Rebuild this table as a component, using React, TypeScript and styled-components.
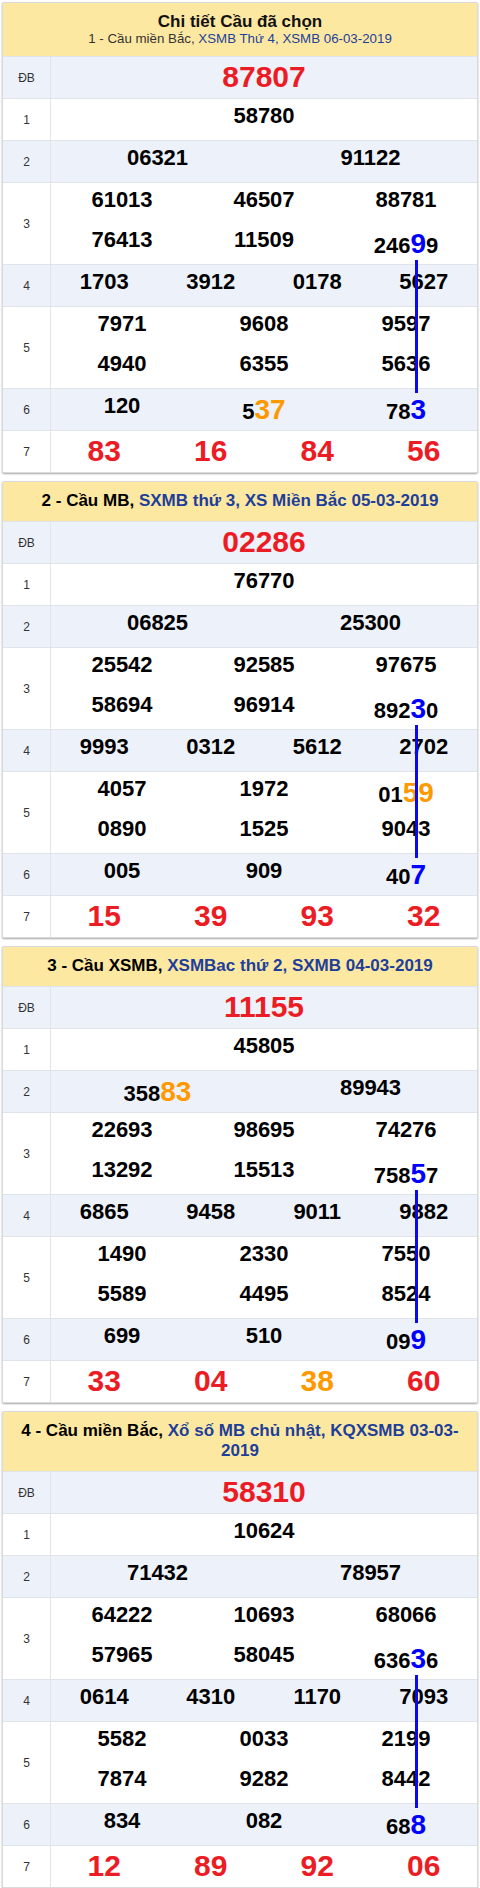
import React from "react";
import styled, { createGlobalStyle } from "styled-components";

const GlobalStyle = createGlobalStyle`
  html, body { margin: 0; padding: 0; background: #ffffff; }
  body { font-family: "Liberation Sans", Arial, sans-serif; }
  * { box-sizing: border-box; }
`;

type Seg = { t: string; c?: "blue" | "orange" };
type Num = string | Seg[];

type CardData = {
  title?: string;
  lead: string;
  link: string;
  db: string;
  r1: Num[];
  r2: Num[];
  r3: Num[][];
  r4: Num[];
  r5: Num[][];
  r6: Num[];
  r7: { t: string; c?: "orange" }[];
};

const cards: CardData[] = [
  {
    title: "Chi tiết Cầu đã chọn",
    lead: "1 - Cầu miền Bắc, ",
    link: "XSMB Thứ 4, XSMB 06-03-2019",
    db: "87807",
    r1: ["58780"],
    r2: ["06321", "91122"],
    r3: [
      ["61013", "46507", "88781"],
      ["76413", "11509", [{ t: "246" }, { t: "9", c: "blue" }, { t: "9" }]],
    ],
    r4: ["1703", "3912", "0178", "5627"],
    r5: [
      ["7971", "9608", "9597"],
      ["4940", "6355", "5636"],
    ],
    r6: ["120", [{ t: "5" }, { t: "37", c: "orange" }], [{ t: "78" }, { t: "3", c: "blue" }]],
    r7: [{ t: "83" }, { t: "16" }, { t: "84" }, { t: "56" }],
  },
  {
    lead: "2 - Cầu MB, ",
    link: "SXMB thứ 3, XS Miền Bắc 05-03-2019",
    db: "02286",
    r1: ["76770"],
    r2: ["06825", "25300"],
    r3: [
      ["25542", "92585", "97675"],
      ["58694", "96914", [{ t: "892" }, { t: "3", c: "blue" }, { t: "0" }]],
    ],
    r4: ["9993", "0312", "5612", "2702"],
    r5: [
      ["4057", "1972", [{ t: "01" }, { t: "59", c: "orange" }]],
      ["0890", "1525", "9043"],
    ],
    r6: ["005", "909", [{ t: "40" }, { t: "7", c: "blue" }]],
    r7: [{ t: "15" }, { t: "39" }, { t: "93" }, { t: "32" }],
  },
  {
    lead: "3 - Cầu XSMB, ",
    link: "XSMBac thứ 2, SXMB 04-03-2019",
    db: "11155",
    r1: ["45805"],
    r2: [[{ t: "358" }, { t: "83", c: "orange" }], "89943"],
    r3: [
      ["22693", "98695", "74276"],
      ["13292", "15513", [{ t: "758" }, { t: "5", c: "blue" }, { t: "7" }]],
    ],
    r4: ["6865", "9458", "9011", "9882"],
    r5: [
      ["1490", "2330", "7550"],
      ["5589", "4495", "8524"],
    ],
    r6: ["699", "510", [{ t: "09" }, { t: "9", c: "blue" }]],
    r7: [{ t: "33" }, { t: "04" }, { t: "38", c: "orange" }, { t: "60" }],
  },
  {
    lead: "4 - Cầu miền Bắc, ",
    link: "Xổ số MB chủ nhật, KQXSMB 03-03-2019",
    db: "58310",
    r1: ["10624"],
    r2: ["71432", "78957"],
    r3: [
      ["64222", "10693", "68066"],
      ["57965", "58045", [{ t: "636" }, { t: "3", c: "blue" }, { t: "6" }]],
    ],
    r4: ["0614", "4310", "1170", "7093"],
    r5: [
      ["5582", "0033", "2199"],
      ["7874", "9282", "8442"],
    ],
    r6: ["834", "082", [{ t: "68" }, { t: "8", c: "blue" }]],
    r7: [{ t: "12" }, { t: "89" }, { t: "92" }, { t: "06" }],
  },
];

const Page = styled.div`
  padding: 2px 2px 0;
  width: 480px;
`;

const Card = styled.section`
  background: #ffffff;
  border: 1px solid #d9dadc;
  border-radius: 2px;
  box-shadow: 0 1px 2px rgba(0, 0, 0, 0.35);
  margin-bottom: 8px;
  &:last-child {
    margin-bottom: 0;
  }
`;

const Header = styled.header<{ $bold?: boolean }>`
  background: #fde8a2;
  text-align: center;
  padding: 9px 10px 10px;
  font-size: 17px;
  line-height: 20px;
  font-weight: ${(p) => (p.$bold ? 700 : 400)};
  color: #000;
`;

const Title = styled.div`
  font-size: 17px;
  font-weight: 700;
  line-height: 20px;
  color: #111;
`;

const Subtitle = styled.div`
  font-size: 13.3px;
  line-height: 14px;
  font-weight: 400;
  color: #333;
`;

const Link = styled.span`
  color: #1d3f99;
`;

const Body = styled.div`
  position: relative;
`;

const Row = styled.div<{ $alt?: boolean }>`
  display: flex;
  border-top: 1px solid #dfe3ea;
  padding-bottom: 1px;
  background: ${(p) => (p.$alt ? "#edf1f9" : "#ffffff")};
`;

const Label = styled.div`
  width: 48px;
  flex: none;
  border-right: 1px solid #e1e4ea;
  margin-bottom: -1px;
  display: flex;
  align-items: center;
  justify-content: center;
  font-size: 12px;
  color: #333;
`;

const Lines = styled.div`
  flex: 1;
  display: flex;
  flex-direction: column;
`;

const Line = styled.div`
  display: flex;
  height: 40px;
`;

const Cell = styled.div<{ $big?: boolean; $color?: string }>`
  flex: 1;
  text-align: center;
  font-weight: 700;
  font-size: ${(p) => (p.$big ? "30px" : "22px")};
  line-height: ${(p) => (p.$big ? "40px" : "1.5")};
  color: ${(p) => p.$color ?? "#000"};
  white-space: nowrap;
`;

const Hl = styled.span<{ $c: "blue" | "orange" }>`
  font-size: 28px;
  color: ${(p) => (p.$c === "blue" ? "#0000ff" : "#ff9900")};
`;

const Connector = styled.div`
  position: absolute;
  left: 412px;
  top: 204px;
  width: 3px;
  height: 133px;
  background: #0a0af0;
`;

const RED = "#ec1c24";
const ORANGE = "#ff9900";

function NumView({ n }: { n: Num }) {
  if (typeof n === "string") return <>{n}</>;
  return (
    <>
      {n.map((s, i) =>
        s.c ? (
          <Hl key={i} $c={s.c}>
            {s.t}
          </Hl>
        ) : (
          <React.Fragment key={i}>{s.t}</React.Fragment>
        )
      )}
    </>
  );
}

function NumLine({ nums }: { nums: Num[] }) {
  return (
    <Line>
      {nums.map((n, i) => (
        <Cell key={i}>
          <NumView n={n} />
        </Cell>
      ))}
    </Line>
  );
}

function PrizeRow({ label, alt, lines }: { label: string; alt?: boolean; lines: Num[][] }) {
  return (
    <Row $alt={alt}>
      <Label>{label}</Label>
      <Lines>
        {lines.map((l, i) => (
          <NumLine key={i} nums={l} />
        ))}
      </Lines>
    </Row>
  );
}

function ResultCard({ d }: { d: CardData }) {
  return (
    <Card>
      {d.title ? (
        <Header>
          <Title>{d.title}</Title>
          <Subtitle>
            {d.lead}
            <Link>{d.link}</Link>
          </Subtitle>
        </Header>
      ) : (
        <Header $bold>
          {d.lead}
          <Link>{d.link}</Link>
        </Header>
      )}
      <Body>
        <Row $alt>
          <Label>ĐB</Label>
          <Lines>
            <Line>
              <Cell $big $color={RED}>
                {d.db}
              </Cell>
            </Line>
          </Lines>
        </Row>
        <PrizeRow label="1" lines={[d.r1]} />
        <PrizeRow label="2" alt lines={[d.r2]} />
        <PrizeRow label="3" lines={d.r3} />
        <PrizeRow label="4" alt lines={[d.r4]} />
        <PrizeRow label="5" lines={d.r5} />
        <PrizeRow label="6" alt lines={[d.r6]} />
        <Row>
          <Label>7</Label>
          <Lines>
            <Line>
              {d.r7.map((x, i) => (
                <Cell key={i} $big $color={x.c ? ORANGE : RED}>
                  {x.t}
                </Cell>
              ))}
            </Line>
          </Lines>
        </Row>
        <Connector />
      </Body>
    </Card>
  );
}

export default function App() {
  return (
    <>
      <GlobalStyle />
      <Page>
        {cards.map((c, i) => (
          <ResultCard key={i} d={c} />
        ))}
      </Page>
    </>
  );
}
